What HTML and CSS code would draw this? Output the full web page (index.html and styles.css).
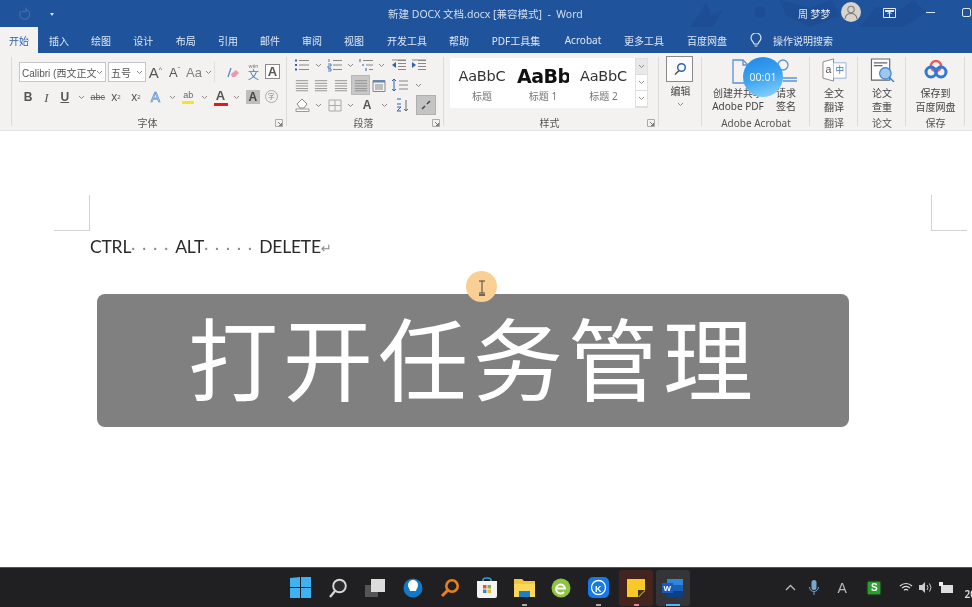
FILE: index.html
```html
<!DOCTYPE html>
<html lang="zh-CN">
<head>
<meta charset="utf-8">
<title>新建 DOCX 文档.docx - Word</title>
<link rel="stylesheet" href="styles.css">
</head>
<body>
<svg class="defs" width="0" height="0" aria-hidden="true">
  <symbol id="caret" viewBox="0 0 7 5"><path d="M1 1l2.500 2.500L6 1" fill="none" stroke="#8a8a8a" stroke-width="1"/></symbol>
  <symbol id="launch" viewBox="0 0 8 8"><path d="M.5 .5h7v7h-7z" fill="none" stroke="#aaa"/><path d="M3 3l3.500 3.500M6.500 4v2.500H4" fill="none" stroke="#777"/></symbol>
  <symbol id="lines" viewBox="0 0 16 14"><path d="M1 1.500h14M1 4.500h14M1 7.500h14M1 10.500h14M1 13h14" stroke="#8a8a8a" stroke-width="1" fill="none"/></symbol>
</svg>
<div class="app">
  <header class="titlebar">
    <svg class="texture" width="972" height="27" viewBox="0 0 972 27"><g fill="#1d4e95"><path d="M690 27l10-14 6-12 5 14 12-6-10 18zM780 0l30 8 22-8 8 16-30 11-24-12zM860 27l16-20 22 4 16-11 12 12-22 15z"/><circle cx="760" cy="12" r="6"/></g></svg>
    <div class="qat">
      <svg class="qat-undo" width="14" height="14" viewBox="0 0 14 14"><path d="M3 4a5 5 0 1 0 5-1.500M8 .5v4H4" fill="none" stroke="#43699f" stroke-width="1.300"/></svg>
      <span class="qat-more"></span>
    </div>
    <div class="doc-title">新建 DOCX 文档.docx [兼容模式]&nbsp; - &nbsp;Word</div>
    <div class="account">
      <span class="user">周 梦梦</span>
      <span class="avatar"><svg width="20" height="20" viewBox="0 0 20 20"><circle cx="10" cy="7.500" r="3.200" fill="none" stroke="#7b7b7b" stroke-width="1.100"/><path d="M4 17c.5-4 3-5.500 6-5.500s5.500 1.500 6 5.500" fill="none" stroke="#7b7b7b" stroke-width="1.100"/></svg></span>
      <svg class="ribbon-opt" width="13" height="11" viewBox="0 0 13 11"><path d="M.5 1.500h12v9H.5z" fill="none" stroke="#dfe7f3"/><path d="M2 3h9v2H2z" fill="#dfe7f3"/><path d="M6.500 10V5M4.500 7l2-2 2 2" stroke="#dfe7f3" fill="none"/></svg>
      <span class="minimize"></span>
      <span class="restore"></span>
    </div>
  </header>

  <nav class="tabs">
    <span class="tab active">开始</span><span class="tab">插入</span><span class="tab">绘图</span><span class="tab">设计</span><span class="tab">布局</span><span class="tab">引用</span><span class="tab">邮件</span><span class="tab">审阅</span><span class="tab">视图</span><span class="tab">开发工具</span><span class="tab">帮助</span><span class="tab">PDF工具集</span><span class="tab">Acrobat</span><span class="tab">更多工具</span><span class="tab">百度网盘</span>
    <span class="tab"><svg width="12" height="15" viewBox="0 0 12 15"><path d="M4 11c0-2-3-3-3-6a5 5 0 0 1 10 0c0 3-3 4-3 6zM4.500 13h3" fill="none" stroke="#e6edf7" stroke-width="1.100"/></svg></span>
    <span class="tab">操作说明搜索</span>
  </nav>

  <section class="ribbon">
    <div class="group g-stub"></div>

    <div class="group g-font">
      <div class="body font-body">
        <div class="font-row1">
          <span class="combo c-font"><span class="c-text">Calibri (西文正文</span><svg class="cr" width="7" height="5"><use href="#caret"/></svg></span>
          <span class="combo c-size"><span class="c-text">五号</span><svg class="cr" width="7" height="5"><use href="#caret"/></svg></span>
          <span class="t big">A<sup>^</sup></span>
          <span class="t mid">A<sup>ˇ</sup></span>
          <span class="t aa">Aa<svg width="7" height="5"><use href="#caret"/></svg></span>
          <i class="sep"></i>
          <span class="t"><svg width="16" height="14" viewBox="0 0 16 14"><path d="M3 12L6 3" stroke="#5a86c4" stroke-width="1.300"/><path d="M6 9l5-4 3 3-4 4H7z" fill="#ec9aab"/></svg></span>
          <span class="t wen"><span class="wen-top">wén</span><span class="wen-main">文</span></span>
          <span class="t boxed">A</span>
        </div>
        <div class="font-row2">
          <b class="t fmt">B</b><i class="t fmt serif">I</i><span class="t fmt under">U</span>
          <span class="t"><svg width="7" height="5"><use href="#caret"/></svg></span>
          <span class="t strike">abc</span>
          <span class="t fmt2">x<sub>2</sub></span><span class="t fmt2">x<sup>2</sup></span>
          <span class="t efx">A</span><span class="t"><svg width="7" height="5"><use href="#caret"/></svg></span>
          <span class="t hilite"><span class="pen">ab</span></span><span class="t"><svg width="7" height="5"><use href="#caret"/></svg></span>
          <span class="t color">A</span><span class="t"><svg width="7" height="5"><use href="#caret"/></svg></span>
          <span class="t shade">A</span>
          <span class="t ring">字</span>
        </div>
      </div>
      <div class="label"><i></i><span>字体</span><svg width="8" height="8"><use href="#launch"/></svg></div>
    </div>

    <div class="group g-para">
      <div class="body para-body">
        <div class="para-row1">
          <span class="t"><svg width="16" height="14" viewBox="0 0 16 14"><path d="M5 2.500h10M5 7h10M5 11.500h10" stroke="#888" fill="none"/><path d="M1 1.500h2v2H1zM1 6h2v2H1zM1 10.500h2v2H1z" fill="#2f64ad"/></svg></span>
          <span class="t"><svg width="7" height="5"><use href="#caret"/></svg></span>
          <span class="t"><svg width="16" height="14" viewBox="0 0 16 14"><path d="M6 2.500h9M6 7h9M6 11.500h9" stroke="#888" fill="none"/><path d="M2 1v3M1 6h3v2H1v2h3M1 11h3v2H1" stroke="#2f64ad" fill="none" stroke-width=".8"/></svg></span>
          <span class="t"><svg width="7" height="5"><use href="#caret"/></svg></span>
          <span class="t"><svg width="16" height="14" viewBox="0 0 16 14"><path d="M5 2.500h10M8 7h7M11 11.500h4" stroke="#888" fill="none"/><path d="M2 1v3M5 6v2M8 10v3" stroke="#2f64ad"/></svg></span>
          <span class="t"><svg width="7" height="5"><use href="#caret"/></svg></span>
          <span class="t"><svg width="16" height="14" viewBox="0 0 16 14"><path d="M7 2.500h8M7 5.500h8M7 8.500h8M7 11.500h8M1 2h14" stroke="#888" fill="none"/><path d="M5 4v6L1 7z" fill="#2f64ad"/></svg></span>
          <span class="t"><svg width="16" height="14" viewBox="0 0 16 14"><path d="M7 2.500h8M7 5.500h8M7 8.500h8M7 11.500h8M1 2h14" stroke="#888" fill="none"/><path d="M1 4v6l4-3z" fill="#2f64ad"/></svg></span>
        </div>
        <div class="para-row2">
          <span class="t"><svg width="14" height="13"><use href="#lines"/></svg></span>
          <span class="t"><svg width="14" height="13"><use href="#lines"/></svg></span>
          <span class="t"><svg width="14" height="13"><use href="#lines"/></svg></span>
          <span class="t sel"><svg width="14" height="13"><use href="#lines"/></svg></span>
          <span class="t"><svg width="14" height="13" viewBox="0 0 14 13"><path d="M1 1.500h12v11H1z" fill="none" stroke="#888"/><path d="M1 1.500h12v2H1z" fill="#5a86c4"/><path d="M3 6h8M3 8h8M3 10h8" stroke="#888"/></svg></span>
          <span class="t"><svg width="18" height="14" viewBox="0 0 18 14"><path d="M3 1v12M1 3l2-2 2 2M1 11l2 2 2-2" fill="none" stroke="#2f64ad"/><path d="M8 3h9M8 7h9M8 11h9" stroke="#888"/></svg></span>
          <span class="t"><svg width="7" height="5"><use href="#caret"/></svg></span>
        </div>
        <div class="para-row3">
          <span class="t"><svg width="15" height="14" viewBox="0 0 15 14"><path d="M7 1l5 5-3 4H5L2 6z" fill="#fff" stroke="#888"/><path d="M1 11h13v2.500H1z" fill="#fff" stroke="#999"/></svg></span>
          <span class="t"><svg width="7" height="5"><use href="#caret"/></svg></span>
          <span class="t"><svg width="14" height="13" viewBox="0 0 14 13"><path d="M1 1h12v11H1zM7 1v11M1 6.500h12" fill="none" stroke="#aaa"/></svg></span>
          <span class="t"><svg width="7" height="5"><use href="#caret"/></svg></span>
          <span class="t xa">A</span>
          <span class="t"><svg width="7" height="5"><use href="#caret"/></svg></span>
          <span class="t"><svg width="15" height="15" viewBox="0 0 15 15"><path d="M11 2v11M9 11l2 2 2-2" fill="none" stroke="#666"/><path d="M2 1h4M2 6h4M2 9h4L2 13h4" fill="none" stroke="#2f64ad"/></svg></span>
          <span class="t sel2"><svg width="14" height="14" viewBox="0 0 14 14"><path d="M3 11l3-3M8 6l3-3" stroke="#4a4a4a" stroke-width="1.600"/></svg></span>
        </div>
      </div>
      <div class="label"><i></i><span>段落</span><svg width="8" height="8"><use href="#launch"/></svg></div>
    </div>

    <div class="group g-styles">
      <div class="body gallery">
        <div class="style-list">
          <div class="style"><span class="s-prev">AaBbC</span><span class="s-name">标题</span></div>
          <div class="style s1"><span class="s-prev">AaBb</span><span class="s-name">标题 1</span></div>
          <div class="style"><span class="s-prev">AaBbC</span><span class="s-name">标题 2</span></div>
        </div>
        <div class="scroller"><span><svg width="7" height="5"><use href="#caret"/></svg></span><span><svg width="7" height="5"><use href="#caret"/></svg></span><span><svg width="7" height="5"><use href="#caret"/></svg></span></div>
      </div>
      <div class="label"><i></i><span>样式</span><svg width="8" height="8"><use href="#launch"/></svg></div>
    </div>

    <div class="group g-edit">
      <div class="body big-tool">
        <span class="edit-box"><svg width="14" height="14" viewBox="0 0 14 14"><circle cx="8.500" cy="5.500" r="3.800" fill="none" stroke="#2f64ad" stroke-width="1.500"/><path d="M6 8.500L2 12.500" stroke="#555" stroke-width="1.600"/></svg></span>
        <span class="tool-text">编辑</span>
        <svg width="7" height="5"><use href="#caret"/></svg>
      </div>
    </div>

    <div class="group g-acro">
      <div class="body acro-tools">
        <div class="acro-tool">
          <svg class="i-doc" width="32" height="28" viewBox="0 0 32 28"><path d="M11 3h10l5 5v18H11z" fill="none" stroke="#5a92d2" stroke-width="1.300"/><path d="M21 3v5h5" fill="none" stroke="#5a92d2" stroke-width="1.300"/></svg>
          <span class="tool-text">创建并共享<br>Adobe PDF</span>
        </div>
        <div class="acro-tool">
          <svg class="i-doc" width="26" height="28" viewBox="0 0 26 28"><circle cx="10" cy="8" r="5" fill="none" stroke="#5a92d2" stroke-width="1.300"/><path d="M4 21h20M10 24h14" stroke="#5a92d2" stroke-width="1.300"/></svg>
          <span class="tool-text">请求<br>签名</span>
        </div>
      </div>
      <div class="label plain">Adobe Acrobat</div>
    </div>

    <div class="group g-one">
      <div class="body big-tool">
        <svg class="i-big" width="25" height="24" viewBox="0 0 26 25"><path d="M1 4l11-3v23L1 21z" fill="#fff" stroke="#888"/><path d="M12 5h13v16H12" fill="#fff" stroke="#8fb0da"/><text x="3.500" y="15.500" class="svg-a">a</text><text x="14" y="16" class="svg-z">中</text></svg>
        <span class="tool-text">全文<br>翻译</span>
      </div>
      <div class="label plain">翻译</div>
    </div>

    <div class="group g-one">
      <div class="body big-tool">
        <svg class="i-big" width="25" height="24" viewBox="0 0 26 25"><path d="M1.500 1h19v22h-19z" fill="#fff" stroke="#666" stroke-width="1.200"/><path d="M4 5h14M4 8h9" stroke="#666" stroke-width="1.200"/><circle cx="16" cy="16" r="6" fill="#9cc7ef" stroke="#3f7fc4" stroke-width="1.200"/><path d="M20 20l5 5" stroke="#3f7fc4" stroke-width="1.500"/></svg>
        <span class="tool-text">论文<br>查重</span>
      </div>
      <div class="label plain">论文</div>
    </div>

    <div class="group g-save">
      <div class="body big-tool">
        <svg class="i-big" width="24" height="24" viewBox="0 0 24 24"><circle cx="12" cy="8" r="5" fill="none" stroke="#e85a5a" stroke-width="2.500"/><circle cx="7" cy="14" r="5" fill="none" stroke="#2f78d6" stroke-width="3"/><circle cx="17" cy="14" r="5" fill="none" stroke="#2f78d6" stroke-width="3"/></svg>
        <span class="tool-text">保存到<br>百度网盘</span>
      </div>
      <div class="label plain">保存</div>
    </div>
  </section>

  <main class="document">
    <div class="marks"><span class="mark m-left"></span><span class="mark m-right"></span></div>
    <p class="line">CTRL<span class="dots">····</span>ALT<span class="dots">·····</span>DELETE<span class="ret">↵</span></p>
    <div class="caption">打开任务管理</div>
    <div class="cursor"><svg width="8" height="16" viewBox="0 0 8 16"><path d="M1 1h6M4 1v12M1 13h6" fill="none" stroke="#444" stroke-width="1"/><path d="M1 15h6" stroke="#444" stroke-width="1.500"/></svg></div>
  </main>

  <div class="timer">00:01</div>

  <footer class="taskbar">
    <div class="task-icons">
      <span class="ti"><svg width="21" height="21" viewBox="0 0 21 21"><path d="M0 1l10-1v10H0zM11 0h10v10H11zM0 11h10v10H0zM11 11h10v10H11z" fill="#3fb2f2"/></svg></span>
      <span class="ti"><svg width="20" height="20" viewBox="0 0 20 20"><circle cx="11.500" cy="8" r="6.300" fill="#2b2b2b" stroke="#d8d8d8" stroke-width="1.900"/><path d="M7 13l-5 6" stroke="#d8d8d8" stroke-width="2.200"/></svg></span>
      <span class="ti"><svg width="21" height="18" viewBox="0 0 21 18"><path d="M0 6h13v12H0z" fill="#555"/><path d="M6 0h14v13H6z" fill="#dcdcdc"/></svg></span>
      <span class="ti"><svg width="20" height="20" viewBox="0 0 20 20"><circle cx="10" cy="10" r="9.500" fill="#1279c9"/><path d="M7 13c0-2-2-3-2-6a5 5 0 0 1 10 0c0 3-2 4-2 6z" fill="#fff"/></svg></span>
      <span class="ti"><svg width="20" height="20" viewBox="0 0 20 20"><circle cx="12" cy="8" r="5.700" fill="none" stroke="#e88119" stroke-width="2.600"/><path d="M7.500 12.500L2 18" stroke="#e88119" stroke-width="3"/></svg></span>
      <span class="ti"><svg width="20" height="21" viewBox="0 0 20 21"><path d="M6 5V3q0-2 4-2t4 2v2" fill="none" stroke="#39a3d9" stroke-width="1.500"/><path d="M0 4h20v15q0 2-2 2H2q-2 0-2-2z" fill="#f3f3f3"/><path d="M6 8h3.500v3.500H6z" fill="#e4572e"/><path d="M10.500 8H14v3.500h-3.500z" fill="#7cb342"/><path d="M6 12.500h3.500V16H6z" fill="#2a8fd6"/><path d="M10.500 12.500H14V16h-3.500z" fill="#f5b818"/></svg></span>
      <span class="ti dot"><svg width="21" height="19" viewBox="0 0 21 19"><path d="M0 1h8l2 2h11v16H0z" fill="#f4c53f"/><path d="M0 6h21v13H0z" fill="#fbd75b"/><path d="M5 13h11v6H5z" fill="#1c80cf"/></svg></span>
      <span class="ti"><svg width="20" height="20" viewBox="0 0 20 20"><circle cx="10" cy="10" r="9.500" fill="#8cc63f"/><path d="M5 10.500h9a4.500 4.500 0 1 0-1 3.500" fill="none" stroke="#fff" stroke-width="2"/></svg></span>
      <span class="ti dot"><svg width="21" height="21" viewBox="0 0 21 21"><rect width="21" height="21" rx="5" fill="#1779e6"/><circle cx="10.500" cy="10.500" r="7" fill="none" stroke="#fff" stroke-width="1.300"/><text x="7" y="14.500" class="svg-k">K</text></svg></span>
      <span class="ti dot hot"><svg width="18" height="18" viewBox="0 0 18 18"><path d="M0 0h18v12l-6 6H0z" fill="#fbc926"/><path d="M18 11h-7v7z" fill="#3a3a2a"/></svg></span>
      <span class="ti open"><svg width="21" height="18" viewBox="0 0 21 18"><path d="M5 0h16v18H5z" fill="#2e86d8"/><path d="M5 6h16v6H5z" fill="#1b5fb5"/><path d="M5 12h16v6H5z" fill="#103f8a"/><path d="M0 4h11v10H0z" fill="#185abd"/><text x="1.500" y="12" class="svg-w">W</text></svg></span>
    </div>
    <div class="tray">
      <svg class="tr-up" width="11" height="7" viewBox="0 0 11 7"><path d="M1 6l4.500-4.500L10 6" fill="none" stroke="#bbb" stroke-width="1.300"/></svg>
      <svg class="tr-mic" width="10" height="16" viewBox="0 0 10 16"><rect x="2.500" y="0" width="5" height="10" rx="2.500" fill="#77a6cf"/><path d="M.5 7a4.500 4.500 0 0 0 9 0M5 12v3" fill="none" stroke="#77a6cf"/></svg>
      <span class="tr-a">A</span>
      <span class="tr-s">S</span>
      <svg class="tr-wifi" width="14" height="11" viewBox="0 0 14 11"><path d="M1 4a8.500 8.500 0 0 1 12 0M3 6.200a5.500 5.500 0 0 1 8 0M5 8.300a2.700 2.700 0 0 1 4 0" fill="none" stroke="#ddd" stroke-width="1.200"/></svg>
      <svg class="tr-vol" width="14" height="11" viewBox="0 0 14 11"><path d="M0 3h3l3-3v11L3 8H0z" fill="#ccc"/><path d="M8 3q2 2.500 0 5M10.500 1.500q3 4 0 8" fill="none" stroke="#ccc"/></svg>
      <svg class="tr-bat" width="14" height="11" viewBox="0 0 14 11"><path d="M2 3h12v8H2z" fill="#ddd"/><path d="M0 0h4v4H0z" fill="#eee"/></svg>
      <span class="tr-clock">20</span>
    </div>
  </footer>
</div>
</body>
</html>
```

FILE: styles.css
```css
* { box-sizing: border-box; }
html, body { margin: 0; padding: 0; }
body { width: 972px; height: 607px; overflow: hidden; background: #fff; font-family: "Noto Sans", "Noto Sans CJK SC", sans-serif; }
.defs { position: absolute; }
.app { position: relative; width: 972px; height: 607px; display: flex; flex-direction: column; overflow: hidden; filter: blur(.4px); }

/* title bar */
.titlebar { position: relative; height: 27px; flex: none; background: #1f539c; display: flex; align-items: center; color: #dfe7f3; font-size: 10px; }
.texture { position: absolute; left: 0; top: 0; }
.qat { position: relative; width: 388px; height: 27px; display: flex; align-items: center; gap: 18px; padding-left: 18px; }
.qat-more { width: 0; height: 0; border: 2.500px solid transparent; border-top: 3px solid #d5dfee; margin-top: 3px; }
.doc-title { position: relative; white-space: nowrap; color: #d5dfee; font-size: 10.500px; }
.account { position: relative; margin-left: auto; display: flex; align-items: center; height: 27px; }
.user { width: 34px; margin-right: 9px; font-size: 10px; white-space: nowrap; color: #e4ebf5; }
.avatar { width: 20px; height: 20px; border-radius: 50%; background: #d8d3cd; margin-top: -3px; display: block; }
.avatar svg { display: block; }
.ribbon-opt { margin: 0 0 2px 22px; }
.minimize { width: 9px; height: 1px; background: #dfe7f3; margin: 0 0 3px 30px; }
.restore { width: 9px; height: 9px; margin: 0 1px 3px 27px; border: 1px solid #dfe7f3; border-radius: 2px; }

/* tabs */
.tabs { height: 26px; flex: none; background: #1f539c; display: grid; grid-template-columns: 38px 42px 42px 42.500px 42.500px 42px 42px 42px 42px 64px 40px 74px 60px 62px 64px 34px 60px; align-items: stretch; font-size: 10px; color: #e0e8f4; }
.tab { display: flex; align-items: center; justify-content: center; white-space: nowrap; }
.tab.active { background: #f3f2f1; color: #2f62a8; }

/* ribbon */
.ribbon { height: 78px; flex: none; background: #f3f2f1; border-bottom: 1px solid #e4e4e4; display: flex; color: #444; font-size: 10px; }
.group { position: relative; display: flex; flex-direction: column; height: 77px; }
.group::after { content: ""; position: absolute; right: 0; top: 4px; bottom: 4px; width: 1px; background: #dbdbdb; }
.g-stub { width: 12px; }
.g-font { width: 275px; }
.g-para { width: 157px; }
.g-styles { width: 215px; }
.g-edit { width: 43px; }
.g-acro { width: 108px; }
.g-one { width: 48px; }
.g-save { width: 59px; }
.body { flex: 1; min-height: 0; }
.label { height: 14px; flex: none; display: grid; grid-template-columns: 1fr auto 1fr; align-items: center; justify-items: center; padding: 0 4px 0 0; font-size: 10px; line-height: 14px; color: #555; }
.label svg { justify-self: end; }
.label i { display: block; }
.label.plain { display: block; text-align: center; padding: 0; white-space: nowrap; }
.t { display: flex; align-items: center; justify-content: center; height: 20px; white-space: nowrap; line-height: 1; }

/* font group */
.font-body { padding: 9px 0 0 7px; display: flex; flex-direction: column; gap: 5px; }
.font-row1 { display: grid; grid-template-columns: 87px 2px 38px 19px 19px 30px 8px 22px 19px 19px; height: 20px; }
.combo { position: relative; height: 20px; background: #fff; border: 1px solid #c6c6c6; display: flex; align-items: center; font-size: 10px; padding-left: 2px; color: #555; }
.c-text { display: block; white-space: nowrap; overflow: hidden; width: 100%; padding-right: 7px; }
.c-font { grid-column: 1; font-family: "Liberation Sans", "Noto Sans CJK SC", sans-serif; }
.c-size { grid-column: 3; }
.cr { position: absolute; right: 2px; top: 7px; }
.big { font-size: 15px; color: #555; font-family: "Liberation Sans", sans-serif; }
.mid { font-size: 13px; color: #555; font-family: "Liberation Sans", sans-serif; }
.big sup, .mid sup { font-size: 7px; color: #2f64ad; margin-top: -6px; }
.aa { font-size: 13px; color: #808080; gap: 3px; font-family: "Liberation Sans", sans-serif; }
.sep { display: block; width: 1px; height: 20px; background: #dfdfdf; }
.wen { flex-direction: column; color: #3f78bd; }
.wen-top { display: block; font-size: 5px; line-height: 6px; color: #777; }
.wen-main { display: block; font-size: 11px; line-height: 12px; }
.boxed { width: 15px; height: 15px; margin: 2px auto; border: 1px solid #8a8a8a; font-size: 13px; font-weight: 600; background: #fdfdfd; color: #555; font-family: "Liberation Sans", sans-serif; }
.font-row2 { display: grid; grid-template-columns: 18px 19px 17.500px 15.500px 17.500px 19px 21px 18px 15.500px 16.500px 16px 16px 15.500px 17.500px 19.500px; height: 20px; font-family: "Liberation Sans", sans-serif; }
.fmt { font-size: 12px; color: #555; }
.serif { font-family: "Liberation Serif", serif; font-size: 13px; }
.under { text-decoration: underline; font-weight: 600; }
.strike { font-size: 9px; text-decoration: line-through; color: #666; }
.fmt2 { font-size: 12px; color: #555; }
.fmt2 sub, .fmt2 sup { font-size: 6px; }
.efx { font-size: 14px; color: #dbe8f8; -webkit-text-stroke: .7px #5b8fce; }
.pen { font-size: 9px; color: #666; border-bottom: 3px solid #f6e61e; padding: 0 1px 1px; line-height: 10px; }
.color { position: relative; font-size: 13px; font-weight: 600; color: #555; padding-bottom: 3px; }
.color::after { content: ""; position: absolute; left: 1px; right: 1px; bottom: 1px; height: 3px; background: #e01b1b; }
.shade { width: 14px; height: 14px; margin: 3px auto; font-size: 12px; font-weight: 700; background: #bdbdbd; color: #444; }
.ring { width: 13px; height: 13px; margin: 3px auto; border: 1px solid #aaa; border-radius: 50%; font-size: 7px; color: #888; font-family: "Noto Sans CJK SC", sans-serif; }

/* paragraph group */
.para-body { padding: 2px 0 0 6px; }
.para-row1 { display: grid; grid-template-columns: 18px 15px 17px 14px 17px 15px 20px 20px; height: 20px; }
.para-row2 { display: grid; grid-template-columns: 18px 20px 20px 19px 18px 24px 12px; height: 20px; }
.para-row3 { display: grid; grid-template-columns: 18px 15px 17px 14px 20px 15px 20px 24px; height: 20px; }
.sel { background: #c8c8c8; border: 1px solid #b8b8b8; }
.sel2 { width: 20px; margin-left: 4px; background: #c4c4c4; border: 1px solid #b0b0b0; }
.xa { font-size: 12px; font-weight: 700; color: #555; font-family: "Liberation Sans", sans-serif; }

/* style gallery */
.gallery { display: flex; padding: 5px 0 0 6px; }
.style-list { width: 185px; height: 50px; background: #fff; display: grid; grid-template-columns: 64px 58px 63px; }
.style { display: flex; flex-direction: column; align-items: center; overflow: hidden; padding-top: 8px; }
.s-prev { font-family: "DejaVu Sans", sans-serif; font-size: 14.500px; line-height: 20px; color: #333; white-space: nowrap; letter-spacing: -.2px; }
.s1 .s-prev { font-family: "DejaVu Sans", sans-serif; font-weight: 700; font-size: 19px; letter-spacing: -.5px; color: #111; width: 52px; overflow: hidden; }
.s-name { font-size: 10px; line-height: 15px; color: #777; margin-top: 3px; }
.scroller { width: 13px; height: 50px; display: flex; flex-direction: column; background: #e9e9e9; border: 1px solid #e0e0e0; }
.scroller span { flex: 1; display: flex; align-items: center; justify-content: center; background: #fff; border-bottom: 1px solid #ddd; }
.scroller span:first-child { background: #e8e8e8; }

/* big tools */
.big-tool { display: flex; flex-direction: column; align-items: center; padding-top: 4px; }
.g-one .big-tool, .g-save .big-tool { padding-top: 5px; }
.i-big { flex: none; margin-bottom: 4px; }
.tool-text { display: block; font-size: 10px; line-height: 14px; color: #444; text-align: center; white-space: nowrap; }
.edit-box { width: 27px; height: 26px; margin: -1px 2px 2px 0; background: #fbfbfb; border: 1px solid #8a8a8a; display: flex; align-items: center; justify-content: center; }
.g-edit .tool-text { margin: 0 0 4px; }
.g-edit svg { display: block; }
.acro-tools { display: flex; padding-top: 4px; }
.acro-tool { display: flex; flex-direction: column; align-items: center; }
.acro-tool:first-child { width: 72px; }
.acro-tool:last-child { width: 24px; }
.i-doc { flex: none; margin-bottom: 2px; }
.acro-tool .tool-text { line-height: 13px; }
.svg-a { font: 11px "Liberation Sans", sans-serif; fill: #555; }
.svg-z { font: 9px "Noto Sans CJK SC", sans-serif; fill: #3f78bd; }
.svg-k { font: 700 9px "Liberation Sans", sans-serif; fill: #fff; }
.svg-w { font: 700 8px "Liberation Sans", sans-serif; fill: #fff; }

/* document */
.document { position: relative; flex: 1; background: #fff; padding: 64px 0 0 90px; }
.marks { height: 36px; margin-left: -36px; width: 913px; display: flex; justify-content: space-between; }
.mark { width: 36px; height: 36px; border-bottom: 1px solid #d2d2d2; }
.m-left { border-right: 1px solid #d2d2d2; }
.m-right { border-left: 1px solid #d2d2d2; }
.line { margin: 3px 0 0; height: 26px; font-family: Lato, "Liberation Sans", sans-serif; font-size: 17.500px; line-height: 26px; color: #2b2b2b; white-space: nowrap; letter-spacing: -.2px; }
.dots { color: #888; font-size: 15px; letter-spacing: 7.100px; }
.ret { color: #888; font-size: 13px; font-family: "DejaVu Sans", sans-serif; }
.caption { width: 752px; height: 133px; margin: 34px 0 0 7px; border-radius: 8px; background: #808080; color: #fff; display: flex; align-items: center; justify-content: center; font-family: "Noto Sans CJK SC", sans-serif; font-size: 90px; font-weight: 400; letter-spacing: 5px; line-height: 1; padding-bottom: 12px; white-space: nowrap; }
.cursor { position: absolute; left: 466px; top: 140px; width: 31px; height: 31px; border-radius: 50%; background: #f9cf94; display: flex; align-items: center; justify-content: center; }
.cursor svg { display: block; margin-top: 3px; }
.timer { position: absolute; left: 743px; top: 57px; width: 40px; height: 40px; border-radius: 50%; background: linear-gradient(165deg, #1f88e6 0, #3ea3f0 50%, #8fd8fb 100%); color: #e8f4ff; font-size: 10.500px; display: flex; align-items: center; justify-content: center; }

/* taskbar */
.taskbar { position: relative; height: 40px; flex: none; background: #202022; border-top: 1px solid #555; display: flex; align-items: center; }
.task-icons { display: grid; grid-template-columns: repeat(11, 37.200px); margin-left: 282.400px; height: 39px; align-items: center; flex: none; }
.ti { position: relative; display: flex; align-items: center; justify-content: center; height: 36px; }
.ti svg { display: block; }
.ti.dot::after { content: ""; position: absolute; bottom: 0; left: 50%; width: 5px; height: 2px; margin-left: -2px; background: #aaa; }
.ti.hot { margin: 0 1.500px; background: #44241f; border-radius: 3px; }
.ti.hot::after { background: #e88a95; }
.ti.open { margin: 0 1.500px; background: #333538; border-radius: 3px; }
.ti.open::after { content: ""; position: absolute; bottom: 0; left: 50%; width: 14px; height: 2px; margin-left: -7px; background: #55b5f2; }
.tray { display: flex; align-items: center; margin-left: 94px; height: 39px; color: #ccc; white-space: nowrap; }
.tray svg, .tray span { flex: none; }
.tr-mic { margin-left: 13px; }
.tr-a { margin-left: 18px; font: 14px "Liberation Sans", sans-serif; color: #bbb; width: 11px; }
.tr-s { margin-left: 20px; width: 12px; height: 12px; background: #2ca02c; color: #fff; font: 700 10px/12px "Liberation Sans", sans-serif; text-align: center; box-shadow: 0 0 2px #3c3; }
.tr-wifi { margin-left: 19px; }
.tr-vol { margin-left: 6px; }
.tr-bat { margin-left: 6px; }
.tr-clock { margin: 12px 0 0 11px; font-size: 10px; font-weight: 600; color: #ddd; }
```
